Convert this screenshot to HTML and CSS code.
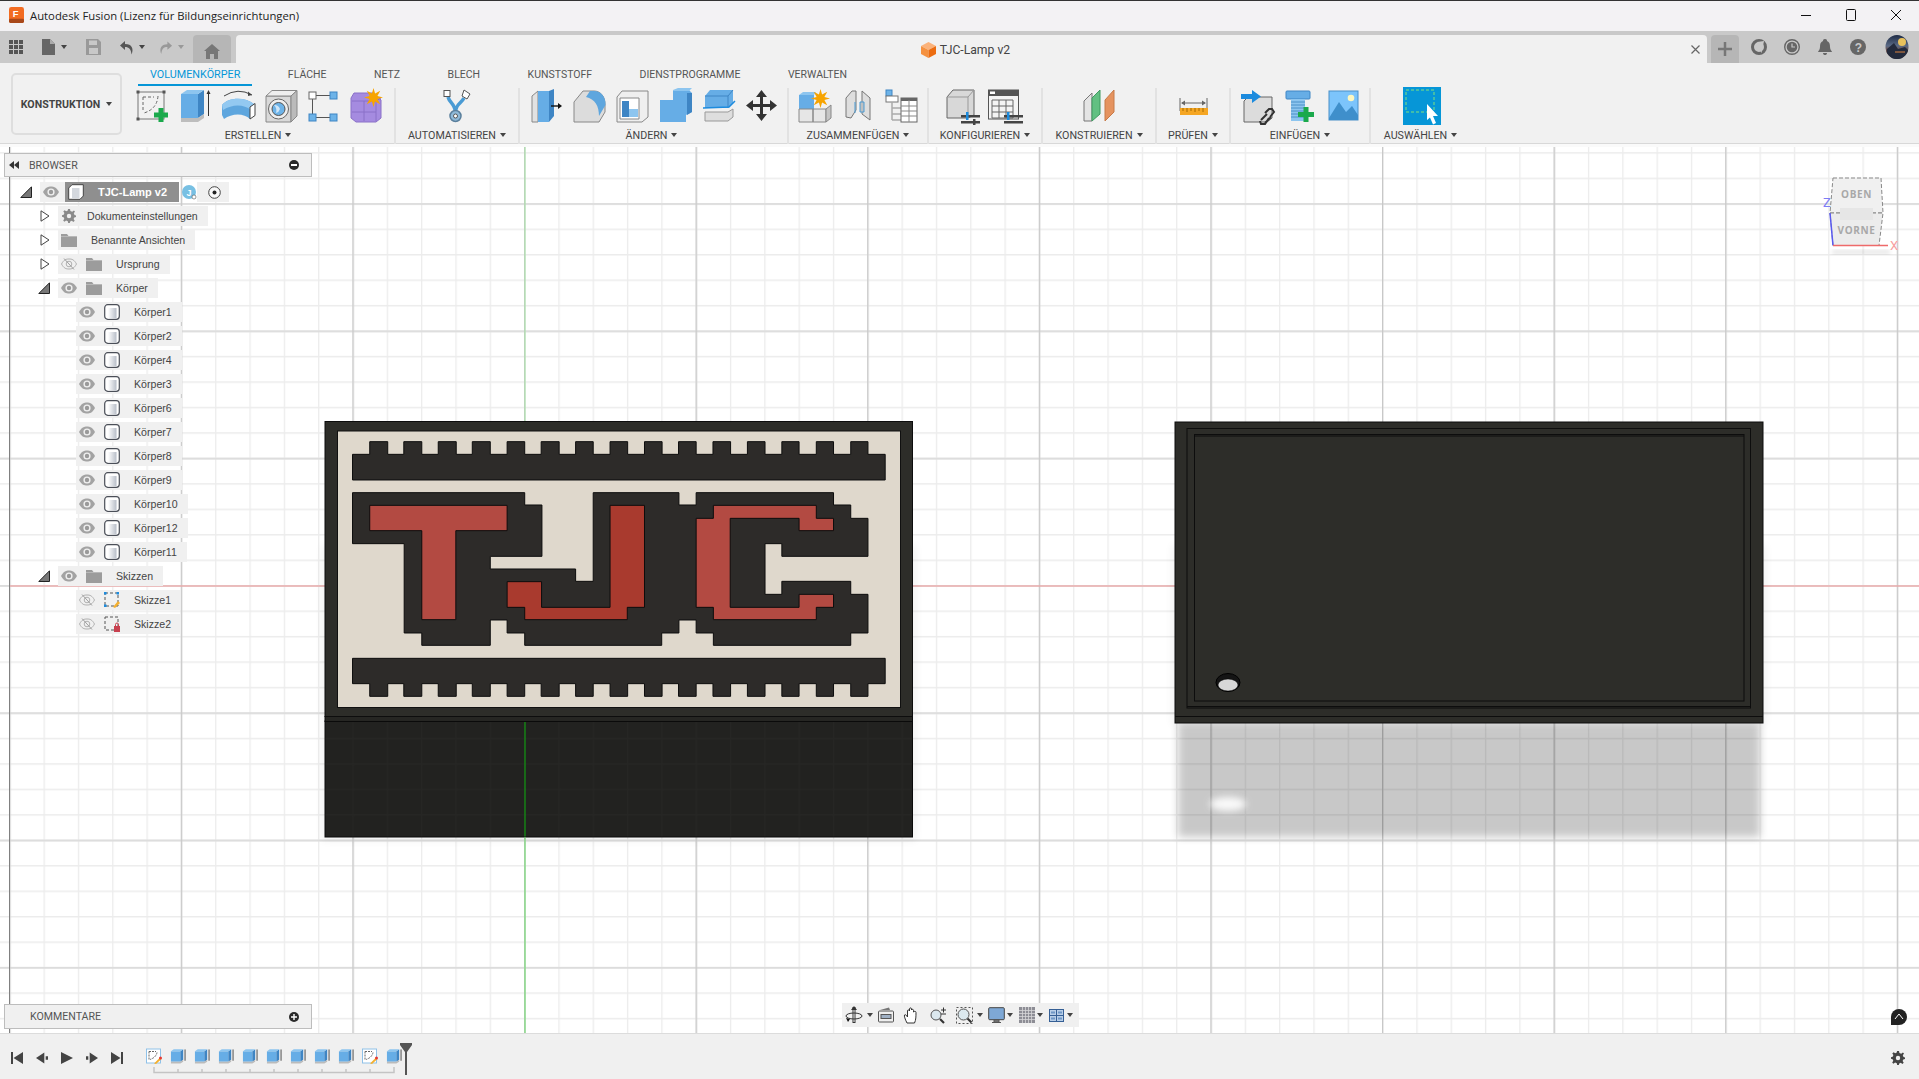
FILE: index.html
```html
<!DOCTYPE html>
<html lang="de">
<head>
<meta charset="utf-8">
<title>Autodesk Fusion</title>
<link rel="stylesheet" href="styles.css">
</head>
<body>
<svg class="defs" aria-hidden="true">
  <symbol id="eye" viewBox="0 0 16 12"><path d="M0 6C3 1 5 .5 8 .5S13 1 16 6C13 11 11 11.500 8 11.500S3 11 0 6Z" fill="#a3a3a3"/><circle cx="8" cy="6" r="3.600" fill="#f0f0f0"/><circle cx="8" cy="6" r="2.200" fill="#9a9a9a"/></symbol>
  <symbol id="eyeoff" viewBox="0 0 16 12"><path d="M.5 6C3 1.500 5 1 8 1S13 1.500 15.500 6C13 10.500 11 11 8 11S3 10.500 .5 6Z" fill="none" stroke="#b0b0b0"/><circle cx="8" cy="6" r="2.800" fill="none" stroke="#b0b0b0"/><path d="M3 .5 13 11.500" stroke="#a0a0a0"/></symbol>
  <symbol id="folder" viewBox="0 0 16 14"><path d="M0 1H6L7.500 3H16V14H0Z" fill="#9c9c9c"/><path d="M0 3.500H16" stroke="#c4c4c4" stroke-width=".7"/></symbol>
  <symbol id="body" viewBox="0 0 16 16"><defs><linearGradient id="bg" x1="0" x2="1" y1="0" y2="0"><stop offset="0" stop-color="#fff"/><stop offset="1" stop-color="#b8bec8"/></linearGradient></defs><rect x=".7" y=".7" width="14.600" height="14.600" rx="3" fill="#fff" stroke="#4b4f58" stroke-width="1.200"/><rect x="4" y="4" width="8.500" height="10.500" fill="url(#bg)"/></symbol>
  <symbol id="tw-open" viewBox="0 0 12 12"><path d="M11.500 .8V11.500H.8Z" fill="#777" stroke="#222"/></symbol>
  <symbol id="tw-closed" viewBox="0 0 10 12"><path d="M1 .8 9 6 1 11.200Z" fill="#fff" stroke="#444"/></symbol>
  <symbol id="star" viewBox="0 0 18 18"><polygon points="18,9 12.700,10.500 15.400,15.400 10.500,12.700 9,18 7.500,12.700 2.600,15.400 5.300,10.500 0,9 5.300,7.500 2.600,2.600 7.500,5.300 9,0 10.500,5.300 15.400,2.600 12.700,7.500" fill="#f7a400"/></symbol>
  <symbol id="t-ext" viewBox="0 0 17 17"><path d="M1 3H11V14H1Z" fill="#66ade6"/><path d="M11 3 14 .8V12L11 14Z" fill="#3e85c4"/><path d="M1 3 4 .8H14L11 3Z" fill="#8dc5ef"/><path d="M1 14H11L14 12V14L11 16H1Z" fill="#bbb"/><path d="M16 1V13" stroke="#444"/></symbol>
  <symbol id="t-sk" viewBox="0 0 16 16"><rect x=".5" y=".5" width="14" height="14" fill="#fff" stroke="#8fc1e8"/><path d="M3 3H10M3 3V11M11 4Q10 9 4 11" fill="none" stroke="#666" stroke-dasharray="2 1"/><path d="M8 15 14 9 15.500 10.500 10 15.500Z" fill="#f4b030"/><circle cx="14.500" cy="9.500" r="1.500" fill="#e53935"/></symbol>
</svg>

<div class="app">
  <header class="titlebar">
    <svg class="app-icon" viewBox="0 0 16 17"><rect width="16" height="17" rx="2.500" fill="#f26b21"/><rect y="12.500" width="16" height="4.500" rx="1.500" fill="#a8481a"/><text x="4" y="11" class="app-f">F</text></svg>
    <span class="title-text">Autodesk Fusion (Lizenz für Bildungseinrichtungen)</span>
    <div class="win-controls">
      <svg class="wc" viewBox="0 0 12 12"><path d="M1 6.500H11" stroke="#111" stroke-width="1"/></svg>
      <svg class="wc" viewBox="0 0 12 12"><rect x="1.500" y=".5" width="9" height="11" rx="1" fill="none" stroke="#111"/></svg>
      <svg class="wc" viewBox="0 0 12 12"><path d="M1 1 11 11M11 1 1 11" stroke="#111"/></svg>
    </div>
  </header>

  <nav class="qat">
    <svg class="q-grid" viewBox="0 0 14 14"><g fill="#555"><rect width="4" height="4"/><rect x="5" width="4" height="4"/><rect x="10" width="4" height="4"/><rect y="5" width="4" height="4"/><rect x="5" y="5" width="4" height="4"/><rect x="10" y="5" width="4" height="4"/><rect y="10" width="4" height="4"/><rect x="5" y="10" width="4" height="4"/><rect x="10" y="10" width="4" height="4"/></g></svg>
    <svg class="q-file" viewBox="0 0 13 16"><path d="M0 0H8L13 5V16H0Z" fill="#666"/><path d="M8 0V5H13" fill="#aaa"/></svg>
    <i class="caret q-c1"></i>
    <svg class="q-save" viewBox="0 0 15 16"><path d="M0 0H12L15 3V16H0Z" fill="#999"/><rect x="3" y="1.500" width="8" height="4.500" fill="#c8c8c8"/><rect x="3" y="9" width="9" height="6" fill="#c8c8c8"/></svg>
    <svg class="q-undo" viewBox="0 0 15 15"><path d="M6 1 1 5.500 6 10V7C10 7 12 9 12.500 14.500 15 9 13 4 6 4Z" fill="#555"/></svg>
    <i class="caret q-c2"></i>
    <svg class="q-redo" viewBox="0 0 15 15"><path d="M9 1 14 5.500 9 10V7C5 7 3 9 2.500 14.500 0 9 2 4 9 4Z" fill="#999"/></svg>
    <i class="caret q-c3 muted"></i>
    <div class="home-tab"><svg class="q-home" viewBox="0 0 16 15"><path d="M8 0 16 7H14V15H10V10H6V15H2V7H0Z" fill="#777"/></svg></div>
    <div class="doc-tab">
      <div class="doc-name">
        <svg class="doc-cube" viewBox="0 0 15 16"><path d="M7.500 0 15 4 7.500 8 0 4Z" fill="#fbb27a"/><path d="M0 4 7.500 8V16L0 12Z" fill="#f5913f"/><path d="M15 4 7.500 8V16L15 12Z" fill="#ec6c10"/></svg>
        <span>TJC-Lamp v2</span>
      </div>
      <svg class="doc-close" viewBox="0 0 9 9"><path d="M.5 .5 8.500 8.500M8.500 .5 .5 8.500" stroke="#666" stroke-width="1.200"/></svg>
    </div>
    <div class="plus-tab"><svg class="q-plus" viewBox="0 0 14 14"><path d="M7 0V14M0 7H14" stroke="#777" stroke-width="2.500"/></svg></div>
    <div class="q-right">
      <svg class="q-ico" viewBox="0 0 16 16"><circle cx="8" cy="8" r="6.500" fill="none" stroke="#666" stroke-width="3"/><path d="M6 3 10 7 7.500 9 10.500 14 13 2Z" fill="#c9c9c9"/></svg>
      <svg class="q-ico" viewBox="0 0 16 16"><circle cx="8" cy="8" r="7.300" fill="none" stroke="#666" stroke-width="1.400"/><circle cx="8" cy="8" r="5.300" fill="#666"/><path d="M8 4.500V8H11" fill="none" stroke="#c8c8c8" stroke-width="1.200"/></svg>
      <svg class="q-ico" viewBox="0 0 16 16"><path d="M8 0C10 0 10 1.500 10 2 12.500 3 13 5 13 8 13 11 15 12 15 13H1C1 12 3 11 3 8 3 5 3.500 3 6 2 6 1.500 6 0 8 0ZM6 14H10C10 15.500 9 16 8 16S6 15.500 6 14Z" fill="#666"/></svg>
      <svg class="q-ico" viewBox="0 0 16 16"><circle cx="8" cy="8" r="8" fill="#666"/><text x="4.700" y="12.500" class="q-help">?</text></svg>
      <svg class="avatar" viewBox="0 0 24 24"><defs><clipPath id="avc"><ellipse cx="12" cy="12" rx="11.500" ry="12"/></clipPath><linearGradient id="avg" x1="0" x2="0" y1="0" y2="1"><stop offset="0" stop-color="#1d2a44"/><stop offset=".45" stop-color="#5a6a86"/><stop offset=".7" stop-color="#7a4a3a"/><stop offset="1" stop-color="#1a2030"/></linearGradient></defs><g clip-path="url(#avc)"><rect width="24" height="24" fill="url(#avg)"/><circle cx="17" cy="7" r="4" fill="#e8c15c"/><path d="M2 14 9 8 13 14 20 12 24 16V24H0Z" fill="#232a3c"/><path d="M10 17H20" stroke="#d9813f"/></g></svg>
    </div>
  </nav>

  <section class="ribbon">
    <button class="workspace"><span>KONSTRUKTION</span><i class="caret"></i></button>
    <div class="ribbon-main">
      <div class="tabs">
        <span class="tab active">VOLUMENKÖRPER</span>
        <span class="tab">FLÄCHE</span>
        <span class="tab">NETZ</span>
        <span class="tab">BLECH</span>
        <span class="tab">KUNSTSTOFF</span>
        <span class="tab">DIENSTPROGRAMME</span>
        <span class="tab">VERWALTEN</span>
      </div>
      <div class="groups">
        <div class="group g1">
          <div class="icons">
            <svg class="ri" viewBox="0 0 43 38"><rect x="7" y="4" width="26" height="27" fill="none" stroke="#777"/><g fill="#555"><rect x="5.500" y="2.500" width="3" height="3"/><rect x="31.500" y="2.500" width="3" height="3"/><rect x="5.500" y="29.500" width="3" height="3"/></g><path d="M12 9H23M12 9V24M27 8Q26 21 13 25" fill="none" stroke="#666" stroke-dasharray="3 2"/><path d="M27.500 20H32.500V24.500H37V29.500H32.500V34H27.500V29.500H23V24.500H27.500Z" fill="#1ba94c"/></svg>
            <svg class="ri" viewBox="0 0 43 38"><path d="M7 6H24V30H7Z" fill="#66ade6"/><path d="M24 6 30 2V26L24 30Z" fill="#3e85c4"/><path d="M7 6 13 2H30L24 6Z" fill="#8dc5ef"/><path d="M7 30H24L30 26V30L24 34H7Z" fill="#bdbdbd"/><path d="M34.500 4V28" stroke="#333"/><path d="M32.500 6 34.500 2 36.500 6Z" fill="#333"/></svg>
            <svg class="ri" viewBox="0 0 43 38"><path d="M7 8Q21 -1 35 7" fill="none" stroke="#444"/><path d="M35 7 31 3.500 31 8Z" fill="#444"/><path d="M5 17C12 9 28 9 37 16L33 31C27 25 15 25 7 31L5 27Z" fill="#5ea6de"/><path d="M5 17C12 9 28 9 37 16L34 22C27 16 15 16 6 22Z" fill="#93c9f1"/><path d="M33 19 38 15.500V27.500L33 31Z" fill="#fff" stroke="#444"/></svg>
            <svg class="ri" viewBox="0 0 43 38"><path d="M6 8H31V34H6Z" fill="#d9d9d9" stroke="#888"/><path d="M6 8 12 2.500H37L31 8Z" fill="#eee" stroke="#888"/><path d="M31 8 37 2.500V28L31 34Z" fill="#bbb" stroke="#888"/><circle cx="18.500" cy="21" r="10" fill="#eee" stroke="#666"/><circle cx="18.500" cy="21" r="6.500" fill="#6db3e8" stroke="#555"/><path d="M14 17A6 6 0 0 1 20 21 6 6 0 0 1 16 25 8 8 0 0 0 14 17Z" fill="#cfe6f8"/></svg>
            <svg class="ri shift-s" viewBox="0 0 43 38"><path d="M15 7.500H29M11.500 11V26M15 29.500H29" stroke="#555"/><rect x="8" y="4" width="7" height="7" fill="#fff" stroke="#666"/><g fill="#6db3e8" stroke="#3e85c4"><rect x="29" y="4" width="7" height="7"/><rect x="8" y="26" width="7" height="7"/><rect x="29" y="26" width="7" height="7"/></g></svg>
            <svg class="ri shift-s" viewBox="0 0 43 38"><path d="M10 5H30L37 12V30L32 34H12L7 30V10Z" fill="#a58be0" stroke="#8a70c8"/><path d="M8 13H32V33M8 24H32M20 13V33M32 13 37 10" fill="none" stroke="#8a70c8"/><use href="#star" x="20" y="0" width="19" height="19"/></svg>
          </div>
          <div class="label">ERSTELLEN<i class="caret"></i></div>
        </div>
        <div class="group g2">
          <div class="icons">
            <svg class="ri" viewBox="0 0 43 38"><path d="M14 9C16 16 21 15 21.500 25M30 10C27 16 22 15 21.500 25" fill="none" stroke="#4a9bd4" stroke-width="3.500"/><rect x="10" y="2.500" width="6" height="6" fill="#fff" stroke="#555"/><path d="M30 2 36 6 33 11 28 8Z" fill="#fff" stroke="#555"/><circle cx="21.500" cy="28" r="5.500" fill="#8fb9d8" stroke="#5a7f9c" stroke-width="1.500"/><circle cx="21.500" cy="28" r="2" fill="#fff" stroke="#555"/></svg>
          </div>
          <div class="label">AUTOMATISIEREN<i class="caret"></i></div>
        </div>
        <div class="group g3">
          <div class="icons">
            <svg class="ri shift-l" viewBox="0 0 43 38"><path d="M11 8 17 3V34H11Z" fill="#e2e2e2" stroke="#888"/><path d="M17 3H28V34H17Z" fill="#66ade6"/><path d="M28 3 33 1V28L28 34Z" fill="#3e85c4"/><path d="M30 18H39" stroke="#111" stroke-width="1.400"/><path d="M37 15 41 18 37 21Z" fill="#111"/></svg>
            <svg class="ri" viewBox="0 0 43 38"><path d="M6 14 15 3H26C32 3 37 8 37 16V24L31 34H6Z" fill="#dcdcdc" stroke="#888"/><path d="M22 3H26C33 3 38 9 37.500 17L31 28C31 18 27 11 18 9Z" fill="#5ea6de"/></svg>
            <svg class="ri" viewBox="0 0 43 38"><path d="M6 9 11 3H37V29L31 34H6Z" fill="#efefef" stroke="#888"/><path d="M9 10H28V31H9Z" fill="#fff" stroke="#888"/><path d="M11 13H18V21H27V29H11Z" fill="#3e85c4"/><path d="M18 21H27V29H18Z" fill="#8dc5ef"/></svg>
            <svg class="ri" viewBox="0 0 43 38"><path d="M6 12H19V2H35L38 5V24L32 27V34H6Z" fill="#66ade6"/><path d="M19 2 24 0H38L35 3H19Z" fill="#8dc5ef"/><path d="M33 5H38V24L33 27Z" fill="#3e85c4"/></svg>
            <svg class="ri" viewBox="0 0 43 38"><path d="M8 8 13 2H36V15L31 20H8Z" fill="#66ade6"/><path d="M8 8H31V20M31 8 36 2" fill="none" stroke="#3e85c4"/><path d="M6 20 32 19 38 13" fill="none" stroke="#1c8bde" stroke-width="1.500"/><path d="M8 24H31L36 21V29L31 33H8Z" fill="#dedede" stroke="#999"/></svg>
            <svg class="ri" viewBox="0 0 43 38"><path d="M21.500 2 27 9H23V16H30V12L37 17.500 30 23V19H23V26H27L21.500 33 16 26H20V19H13V23L6 17.500 13 12V16H20V9H16Z" fill="#333"/></svg>
          </div>
          <div class="label">ÄNDERN<i class="caret"></i></div>
        </div>
        <div class="group g4">
          <div class="icons">
            <svg class="ri" viewBox="0 0 43 38"><path d="M5 7H20V21H5Z" fill="#66ade6"/><path d="M5 7 9 4H22L20 7Z" fill="#8dc5ef"/><path d="M5 21H19V34H5ZM19 21H32V34H19Z" fill="#e6e6e6" stroke="#888"/><path d="M32 21 37 17V30L32 34Z" fill="#c5c5c5" stroke="#888"/><use href="#star" x="17" y="1" width="19" height="19"/></svg>
            <svg class="ri" viewBox="0 0 43 38"><path d="M9 10 15 3H19V22L14 30 9 29Z" fill="#dedede" stroke="#777"/><path d="M25 3 33 10V32L25 26Z" fill="#dedede" stroke="#777"/><path d="M18 14V25M23 14H27V24H23Z" fill="#c0c0c0" stroke="#4a9bd4"/></svg>
            <svg class="ri" viewBox="0 0 43 38"><rect x="6" y="2" width="6" height="6" fill="#6db3e8" stroke="#3e85c4"/><rect x="6" y="8" width="12" height="6" fill="#fff" stroke="#777"/><path d="M12 14V32M12 20H21M12 26H21M12 32H21" stroke="#aaa" stroke-width="1.500"/><rect x="21" y="10" width="16" height="24" fill="#fff" stroke="#666"/><path d="M21 11.500H37" stroke="#666" stroke-width="3"/><path d="M21 18H37M21 23H37M21 28H37M29 12V34" stroke="#888"/></svg>
          </div>
          <div class="label">ZUSAMMENFÜGEN<i class="caret"></i></div>
        </div>
        <div class="group g5">
          <div class="icons">
            <svg class="ri" viewBox="0 0 43 38"><path d="M5 9 11 2H32V27L26 30H5Z" fill="#d8d8d8" stroke="#666"/><path d="M5 9H26V30M26 9 32 2" fill="none" stroke="#999"/><path d="M19 27H38V29.500H19ZM19 33H38V35.500H19Z" fill="#444"/><rect x="24" y="24" width="2.500" height="8" fill="#1c8bde"/><rect x="31" y="31" width="2.500" height="6" fill="#444"/></svg>
            <svg class="ri" viewBox="0 0 43 38"><rect x="3.500" y="2" width="30" height="29" fill="#f4f4f4" stroke="#555"/><rect x="3.500" y="2" width="30" height="6" fill="#555"/><rect x="5" y="3.500" width="5" height="2.500" fill="#fff"/><path d="M7 12H28V30M7 18H28M7 24H28M7 12V30H28M14 12V30M21 12V30" fill="none" stroke="#666"/><path d="M19 27H38V29.500H19ZM19 33H38V35.500H19Z" fill="#444"/><rect x="22" y="24" width="2.500" height="8" fill="#1c8bde"/></svg>
          </div>
          <div class="label">KONFIGURIEREN<i class="caret"></i></div>
        </div>
        <div class="group g6">
          <div class="icons">
            <svg class="ri" viewBox="0 0 43 38"><path d="M6 13 14 5V33H6Z" fill="#e4e4e4" stroke="#777"/><path d="M14 10 22 2V26L14 33Z" fill="#62c082" stroke="#3f9a60"/><path d="M27 12 36 2V24L27 33Z" fill="#e5935f" stroke="#c77a48"/></svg>
          </div>
          <div class="label">KONSTRUIEREN<i class="caret"></i></div>
        </div>
        <div class="group g7">
          <div class="icons">
            <svg class="ri" viewBox="0 0 43 38"><path d="M8 10V23M35 10V23M10 15H33" fill="none" stroke="#666"/><path d="M13 12.500 9 15 13 17.500ZM30 12.500 34 15 30 17.500Z" fill="#666"/><rect x="8" y="20" width="28" height="7" fill="#f5a623"/><path d="M11 20V23M15 20V24M19 20V23M23 20V24M27 20V23M31 20V24" stroke="#a66a00"/></svg>
          </div>
          <div class="label">PRÜFEN<i class="caret"></i></div>
        </div>
        <div class="group g8">
          <div class="icons">
            <svg class="ri" viewBox="0 0 43 38"><path d="M8 13 12 9H36V30L31 34H8Z" fill="#dcdcdc" stroke="#666"/><path d="M5 6H16V2L25 8.500 16 15V11H5Z" fill="#1c8bde"/><path d="M25 32 31 26M29 35 35 29M29 25 33 21H36L38 24 34 29M33 30 29 36H25L24 33" fill="none" stroke="#333" stroke-width="2"/></svg>
            <svg class="ri" viewBox="0 0 43 38"><rect x="7" y="3" width="24" height="8" rx="1" fill="#66ade6" stroke="#3e85c4"/><rect x="12" y="11" width="14" height="22" fill="#8dc5ef"/><path d="M12 14H26M12 17H26M12 20H26M12 23H26M12 26H26M12 29H26" stroke="#4a90c8"/><path d="M24.500 19H29.500V24H35V29H29.500V34H24.500V29H19V24H24.500Z" fill="#1ba94c"/></svg>
            <svg class="ri" viewBox="0 0 43 38"><rect x="7" y="3" width="29" height="29" fill="#7cc4fb" stroke="#4a90c8"/><path d="M7 30 17 14 24 24 30 18 36 27V32H7Z" fill="#3f8fcb"/><circle cx="29" cy="10" r="3.300" fill="#fdf7c0"/></svg>
          </div>
          <div class="label">EINFÜGEN<i class="caret"></i></div>
        </div>
        <div class="group g9">
          <div class="icons">
            <svg class="sel" viewBox="0 0 38 38"><rect width="38" height="38" fill="#0696d7"/><rect x="3" y="3" width="28" height="22" fill="none" stroke="#7fe27f" stroke-dasharray="3 2"/><path d="M24 17 35 29H30L33 36 30 37.500 27 30.500 24 33Z" fill="#fff"/></svg>
          </div>
          <div class="label">AUSWÄHLEN<i class="caret"></i></div>
        </div>
      </div>
    </div>
  </section>

  <main class="viewport">
    <svg class="canvas" viewBox="0 147 1919 886">
      <defs>
        <pattern id="minor" patternUnits="userSpaceOnUse" x="524" y="585" width="34.320" height="25.460">
          <rect width="1.300" height="25.460" class="gm"/><rect width="34.320" height="1.500" class="gm"/>
        </pattern>
        <pattern id="major" patternUnits="userSpaceOnUse" x="524" y="585" width="171.600" height="127.300">
          <rect width="171.600" height="1.800" class="gmh"/><rect width="1.300" height="127.300" class="gmv"/>
        </pattern>
        <filter id="blur5" x="-10%" y="-10%" width="120%" height="120%"><feGaussianBlur stdDeviation="4"/></filter>
        <filter id="blur3" x="-60%" y="-100%" width="220%" height="300%"><feGaussianBlur stdDeviation="3.500"/></filter>
        <filter id="cubeb" x="-20%" y="-20%" width="140%" height="140%"><feGaussianBlur stdDeviation="2"/></filter>
      </defs>
      <rect x="0" y="147" width="1919" height="886" class="paper"/>
      <rect x="0" y="147" width="1919" height="886" fill="url(#minor)"/>
      <rect x="0" y="147" width="1919" height="886" fill="url(#major)"/>
      <rect x="9" y="147" width="1" height="886" class="axis-left"/>
      <rect x="10" y="585.500" width="1909" height="1" class="axis-red"/>
      <rect x="524.500" y="147" width="1" height="886" class="axis-green"/>

      <rect x="322" y="545" width="594" height="296" class="shadow-faint" filter="url(#blur5)"/>
      <rect x="1178" y="723" width="582" height="114" class="shadow" filter="url(#blur5)"/>
      <rect x="1172" y="545" width="594" height="180" class="shadow-faint" filter="url(#blur5)"/>
      <ellipse cx="1228" cy="804" rx="18" ry="7" class="shadow-hole" filter="url(#blur3)"/>

      <!-- left model -->
      <rect x="325" y="721" width="587.500" height="116" class="m-side"/>
      <rect x="325" y="721" width="587.500" height="116" fill="url(#minor)" class="m-sidegrid"/>
      <rect x="524.500" y="722" width="1" height="114.500" class="axis-green-strong"/>
      <rect x="524.500" y="837" width="1" height="196" class="axis-green-mid"/>
      <rect x="325" y="716.500" width="587.500" height="5" class="m-band"/>
      <rect x="325" y="421.500" width="587.500" height="295" class="m-top"/>
      <rect x="337.500" y="431" width="563" height="276.500" class="m-cream"/>
      <g transform="translate(320 415) scale(.38265 .33333)">
        <path class="m-dark" d="M85 118H130V80H177V118H219V80H266V118H309V80H356V118H398V80H445V118H489V80H535V118H578V80H625V118H668V80H714V118H758V80H804V118H848V80H894V118H937V80H983V118H1027V80H1073V118H1117V80H1163V118H1207V80H1252V118H1297V80H1342V118H1387V80H1432V118H1477V195H85Z"/>
        <path class="m-dark" d="M85 730H1477V806H1432V844H1387V806H1342V844H1297V806H1252V844H1207V806H1163V844H1117V806H1073V844H1027V806H983V844H937V806H894V844H848V806H804V844H758V806H714V844H668V806H625V844H578V806H535V844H489V806H445V844H398V806H356V844H309V806H266V844H219V806H177V844H130V806H85Z"/>
        <path class="m-dark" d="M85 233H535V270H580V424H445V462H668V499H714V233H938V270H983V233H1342V270H1387V310H1432V424H1207V386H1163V538H1207V499H1387V538H1432V654H1387V691H1028V654H983V615H938V654H893V691H535V654H489V615H445V691H266V654H220V386H85Z"/>
        <path class="m-red" d="M130 271H489V347H355V614H266V347H130Z"/>
        <path class="m-red2" d="M758 271H848V577H803V614H535V577H489V500H579V577H758Z"/>
        <path class="m-red" d="M1028 271H1297V310H1342V347H1252V310H1072V577H1252V538H1342V577H1297V614H1028V577H983V310H1028Z"/>
      </g>

      <!-- right model -->
      <rect x="1175" y="422" width="588" height="301" class="m-top"/>
      <path d="M1175 716.500H1763" class="m-line"/>
      <rect x="1187" y="428.500" width="563.500" height="279.500" class="m-frame"/>
      <rect x="1194.500" y="434.500" width="549.500" height="266.500" class="m-frame"/>
      <path d="M1194.500 436H1744M1187 706.500H1750.500" class="m-line"/>
      <ellipse cx="1228" cy="682.500" rx="12" ry="9" class="m-hole"/>
      <ellipse cx="1228" cy="685" rx="10" ry="6" class="m-holeb"/>

      <!-- view cube -->
      <g class="cube">
        <path d="M1832 250H1890V254H1832Z" class="cube-shadow" filter="url(#cubeb)"/>
        <path d="M1833 178H1881L1883 213H1830Z" class="cube-top"/>
        <path d="M1830 213H1883L1879 245.500H1833Z" class="cube-front"/>
        <rect x="1840" y="208" width="33" height="12" class="cube-inner"/>
        <path d="M1830 213 1833 245.500" class="cube-z"/>
        <path d="M1833 245.500H1888" class="cube-x"/>
        <text x="1856.500" y="198" class="cube-t">OBEN</text>
        <text x="1856.500" y="234" class="cube-t">VORNE</text>
        <text x="1827" y="207" class="cube-lz">Z</text>
        <text x="1894" y="250" class="cube-lx">X</text>
      </g>
    </svg>

    <aside class="browser">
      <div class="panel-head">
        <svg class="rew" viewBox="0 0 10 8"><path d="M5 0V8L0 4ZM10 0V8L5 4Z" fill="#333"/></svg>
        <span>BROWSER</span>
        <svg class="pm" viewBox="0 0 10 10"><circle cx="5" cy="5" r="5" fill="#2a2a2a"/><rect x="2" y="4" width="6" height="2" fill="#fff"/></svg>
      </div>
      <div class="tree">
        <div class="row l0">
          <svg class="tw"><use href="#tw-open"/></svg>
          <div class="item root">
            <svg class="ic-eye"><use href="#eye"/></svg>
            <div class="root-name">
              <svg class="ic-root" viewBox="0 0 16 16"><path d="M.7 4 4 .7H15.300V12L12 15.300H.7Z" fill="#fff" stroke="#444"/><path d="M4 4H11.500V14.500H4Z" fill="#d4d8de"/></svg>
              <b>TJC-Lamp v2</b>
            </div>
          </div>
          <svg class="badge" viewBox="0 0 15 15"><circle cx="7" cy="7" r="7" fill="#78c0e3"/><text x="4.500" y="10.500" class="badge-t">J</text><circle cx="12" cy="12" r="2" fill="#fff" stroke="#555" stroke-width=".6"/></svg>
          <svg class="radio" viewBox="0 0 13 13"><circle cx="6.500" cy="6.500" r="5.800" fill="#f8f8f8" stroke="#444"/><circle cx="6.500" cy="6.500" r="2" fill="#222"/></svg>
        </div>
        <div class="row l1">
          <svg class="tw tw-c"><use href="#tw-closed"/></svg>
          <div class="item pad-doc">
            <svg class="ic-gear" viewBox="0 0 14 14"><path d="M6 0H8L8.400 2 10.200 2.700 11.900 1.500 13 2.600 11.800 4.300 12.500 6 14 6.400V8L12.300 8.400 11.600 10.100 12.700 11.800 11.400 13 9.800 11.800 8.200 12.500 7.800 14H6.200L5.800 12.300 4.100 11.600 2.400 12.700 1.200 11.400 2.300 9.800 1.600 8.200 0 7.800V6.200L1.700 5.800 2.400 4.100 1.300 2.400 2.600 1.200 4.200 2.300 5.800 1.600Z" fill="#8a8a8a"/><circle cx="7" cy="7" r="2.200" fill="#f0f0f0"/></svg>
            <span class="t">Dokumenteinstellungen</span>
          </div>
        </div>
        <div class="row l1">
          <svg class="tw tw-c"><use href="#tw-closed"/></svg>
          <div class="item pad-view">
            <svg class="ic-folder"><use href="#folder"/></svg>
            <span class="t">Benannte Ansichten</span>
          </div>
        </div>
        <div class="row l1">
          <svg class="tw tw-c"><use href="#tw-closed"/></svg>
          <div class="item"><svg class="ic-eye"><use href="#eyeoff"/></svg><svg class="ic-folder gap"><use href="#folder"/></svg><span class="t">Ursprung</span></div>
        </div>
        <div class="row l1">
          <svg class="tw"><use href="#tw-open"/></svg>
          <div class="item"><svg class="ic-eye"><use href="#eye"/></svg><svg class="ic-folder gap"><use href="#folder"/></svg><span class="t">Körper</span></div>
        </div>
        <div class="row l2"><div class="item"><svg class="ic-eye"><use href="#eye"/></svg><svg class="ic-body"><use href="#body"/></svg><span class="t">Körper1</span></div></div>
        <div class="row l2"><div class="item"><svg class="ic-eye"><use href="#eye"/></svg><svg class="ic-body"><use href="#body"/></svg><span class="t">Körper2</span></div></div>
        <div class="row l2"><div class="item"><svg class="ic-eye"><use href="#eye"/></svg><svg class="ic-body"><use href="#body"/></svg><span class="t">Körper4</span></div></div>
        <div class="row l2"><div class="item"><svg class="ic-eye"><use href="#eye"/></svg><svg class="ic-body"><use href="#body"/></svg><span class="t">Körper3</span></div></div>
        <div class="row l2"><div class="item"><svg class="ic-eye"><use href="#eye"/></svg><svg class="ic-body"><use href="#body"/></svg><span class="t">Körper6</span></div></div>
        <div class="row l2"><div class="item"><svg class="ic-eye"><use href="#eye"/></svg><svg class="ic-body"><use href="#body"/></svg><span class="t">Körper7</span></div></div>
        <div class="row l2"><div class="item"><svg class="ic-eye"><use href="#eye"/></svg><svg class="ic-body"><use href="#body"/></svg><span class="t">Körper8</span></div></div>
        <div class="row l2"><div class="item"><svg class="ic-eye"><use href="#eye"/></svg><svg class="ic-body"><use href="#body"/></svg><span class="t">Körper9</span></div></div>
        <div class="row l2"><div class="item"><svg class="ic-eye"><use href="#eye"/></svg><svg class="ic-body"><use href="#body"/></svg><span class="t">Körper10</span></div></div>
        <div class="row l2"><div class="item"><svg class="ic-eye"><use href="#eye"/></svg><svg class="ic-body"><use href="#body"/></svg><span class="t">Körper12</span></div></div>
        <div class="row l2"><div class="item"><svg class="ic-eye"><use href="#eye"/></svg><svg class="ic-body"><use href="#body"/></svg><span class="t">Körper11</span></div></div>
        <div class="row l1">
          <svg class="tw"><use href="#tw-open"/></svg>
          <div class="item"><svg class="ic-eye"><use href="#eye"/></svg><svg class="ic-folder gap"><use href="#folder"/></svg><span class="t">Skizzen</span></div>
        </div>
        <div class="row l2"><div class="item"><svg class="ic-eye"><use href="#eyeoff"/></svg><svg class="ic-body" viewBox="0 0 16 16"><rect x="1" y="1" width="13" height="13" fill="none" stroke="#555" stroke-dasharray="3 2"/><g fill="#1c8bde"><rect width="2.500" height="2.500"/><rect x="12.500" width="2.500" height="2.500"/><rect y="12.500" width="2.500" height="2.500"/></g><path d="M9 15 14 9 16 11 11 16Z" fill="#f4b030"/></svg><span class="t">Skizze1</span></div></div>
        <div class="row l2"><div class="item"><svg class="ic-eye"><use href="#eyeoff"/></svg><svg class="ic-body" viewBox="0 0 16 16"><rect x="1" y="1" width="13" height="13" fill="none" stroke="#555" stroke-dasharray="3 2"/><rect x="10" y="10" width="6" height="6" fill="#c8414f"/><path d="M11.500 10V8.500A1.500 1.500 0 0 1 14.500 8.500V10" fill="none" stroke="#c8414f"/></svg><span class="t">Skizze2</span></div></div>
      </div>
    </aside>

    <aside class="comments">
      <span>KOMMENTARE</span>
      <svg class="pm" viewBox="0 0 10 10"><circle cx="5" cy="5" r="5" fill="#2a2a2a"/><path d="M2 4.300H4.300V2H5.700V4.300H8V5.700H5.700V8H4.300V5.700H2Z" fill="#fff"/></svg>
    </aside>

    <div class="navbar">
      <svg class="nv w18" viewBox="0 0 18 18"><path d="M9 1V17" stroke="#333" stroke-width="3"/><path d="M9 2V16" stroke="#fff"/><path d="M6 4 9 0 12 4Z" fill="#333"/><ellipse cx="9" cy="10" rx="8" ry="3" fill="none" stroke="#333"/><path d="M1 12 5 13 3 16Z" fill="#111"/></svg><i class="caret nc nc4"></i>
      <svg class="nv w16 ml" viewBox="0 0 16 16"><rect x=".5" y="4" width="15" height="11" rx="1" fill="#eee" stroke="#555"/><rect x="3" y="7.500" width="10" height="4" fill="#9fb0c4" stroke="#555"/><path d="M2 3 11 .5 12 3Z" fill="#777"/></svg>
      <svg class="nv w17 ml2" viewBox="0 0 17 17"><path d="M4 16C2 12 1 9 1.500 8 2.500 7 3.500 8.500 4.500 10V4C4.500 2.500 6 2.500 6.500 4V2C6.500 .5 8.500 .5 8.500 2V3C9 2 10.500 2 10.500 3.500V5C11 4 13 4 13 5.500 13 9 13 13 11.500 16Z" fill="#fff" stroke="#333"/></svg>
      <svg class="nv w17 ml3" viewBox="0 0 17 17"><circle cx="6" cy="8" r="5" fill="#dbe8ee" stroke="#555"/><path d="M10 12 14 16" stroke="#333" stroke-width="2.200"/><path d="M11 3H16M13.500 .5V5.500M11 7H16" stroke="#333"/></svg>
      <svg class="nv w17 ml4" viewBox="0 0 17 17"><rect x=".5" y=".5" width="16" height="16" fill="none" stroke="#555" stroke-dasharray="2 2"/><circle cx="7.500" cy="7.500" r="5.500" fill="#dbe8ee" stroke="#555"/><path d="M11.500 11.500 15.500 15.500" stroke="#333" stroke-width="2.200"/></svg><i class="caret nc nc4"></i>
      <svg class="nv w17 ml5" viewBox="0 0 17 17"><rect x=".7" y=".7" width="15.600" height="12" rx="1" fill="#7ea8d6" stroke="#444"/><path d="M6 13H11V15H6ZM4 15.500H13" fill="#888" stroke="#555"/></svg><i class="caret nc nc2"></i>
      <svg class="nv w16 ml6" viewBox="0 0 16 16"><rect width="16" height="16" fill="#8d8d95"/><path d="M3.500 0V16M6.500 0V16M9.500 0V16M12.500 0V16M0 3.500H16M0 6.500H16M0 9.500H16M0 12.500H16" stroke="#d5d5d8" stroke-width=".8"/></svg><i class="caret nc nc2"></i>
      <svg class="nv w15 ml6" viewBox="0 0 15 13"><rect x=".5" y=".5" width="14" height="12" fill="#b9cfe8" stroke="#355f95"/><path d="M7.500 0V13M0 6.500H15" stroke="#355f95"/><g fill="#6f97c6"><rect x="2" y="2.500" width="4" height="2"/><rect x="9" y="2.500" width="4" height="2"/><rect x="2" y="8.500" width="4" height="2"/><rect x="9" y="8.500" width="4" height="2"/></g></svg><i class="caret nc nc3"></i>
    </div>

    <svg class="chat" viewBox="0 0 16 16"><path d="M8 0A8 8 0 0 1 8 16H0V8A8 8 0 0 1 8 0Z" fill="#222"/><path d="M4 10 8 5 12 10" fill="none" stroke="#fff"/></svg>
  </main>

  <footer class="timeline">
    <div class="transport">
      <svg class="tr" viewBox="0 0 12 12"><path d="M0 0H2V12H0ZM12 0V12L2.500 6Z" fill="#444"/></svg>
      <svg class="tr" viewBox="0 0 13 12"><path d="M9 0V12L0 6ZM10.500 4H13V8H10.500Z" fill="#444"/></svg>
      <svg class="tr" viewBox="0 0 13 13"><path d="M0 0 13 6.500 0 13Z" fill="#444"/></svg>
      <svg class="tr" viewBox="0 0 13 12"><path d="M4 0V12L13 6ZM0 4H2.500V8H0Z" fill="#444"/></svg>
      <svg class="tr" viewBox="0 0 12 12"><path d="M0 0V12L9.500 6ZM10 0H12V12H10Z" fill="#444"/></svg>
    </div>
    <div class="track">
      <div class="steps">
        <svg class="st"><use href="#t-sk"/></svg>
        <svg class="st"><use href="#t-ext"/></svg>
        <svg class="st"><use href="#t-ext"/></svg>
        <svg class="st"><use href="#t-ext"/></svg>
        <svg class="st"><use href="#t-ext"/></svg>
        <svg class="st"><use href="#t-ext"/></svg>
        <svg class="st"><use href="#t-ext"/></svg>
        <svg class="st"><use href="#t-ext"/></svg>
        <svg class="st"><use href="#t-ext"/></svg>
        <svg class="st"><use href="#t-sk"/></svg>
        <svg class="st"><use href="#t-ext"/></svg>
      </div>
      <svg class="bracket" viewBox="0 0 264 7"><path d="M12 0V5.500H252V0M36 2V5M60 2V5M84 2V5M108 2V5M132 2V5M156 2V5M180 2V5M204 2V5M228 2V5" fill="none" stroke="#c4c4c4" stroke-width="1.500"/></svg>
      <svg class="marker" viewBox="0 0 12 32"><path d="M0 0H12V2L7 9V32H5V9L0 2Z" fill="#555"/></svg>
    </div>
    <svg class="gear" viewBox="0 0 14 14"><path d="M6 0H8L8.400 2 10.200 2.700 11.900 1.500 13 2.600 11.800 4.300 12.500 6 14 6.400V8L12.300 8.400 11.600 10.100 12.700 11.800 11.400 13 9.800 11.800 8.200 12.500 7.800 14H6.200L5.800 12.300 4.100 11.600 2.400 12.700 1.200 11.400 2.300 9.800 1.600 8.200 0 7.800V6.200L1.700 5.800 2.400 4.100 1.300 2.400 2.600 1.200 4.200 2.300 5.800 1.600Z" fill="#444"/><circle cx="7" cy="7" r="2.200" fill="#f0f0f0"/></svg>
  </footer>
</div>
</body>
</html>
```
FILE: styles.css
```css
* { box-sizing: border-box; }
html, body { margin: 0; height: 100%; overflow: hidden; background: #fff; }
body { font-family: Roboto, "Liberation Sans", sans-serif; color: #444; }
svg { display: block; flex: none; }
.defs { position: absolute; width: 0; height: 0; }
.app { display: flex; flex-direction: column; height: 100vh; width: 100%; }

/* title bar */
.titlebar { height: 31px; flex: none; display: flex; align-items: center; background: #f3f2f4; border-top: 1px solid #333; padding: 0 0 2px 9px; }
.app-icon { width: 15px; height: 16px; }
.app-f { font: bold 10px "Liberation Sans", sans-serif; fill: #fff; }
.title-text { margin-left: 6px; font: 11.3px "Open Sans", sans-serif; color: #222; }
.win-controls { margin-left: auto; display: flex; gap: 33px; padding-right: 17px; }
.wc { width: 12px; height: 12px; }

/* quick access */
.qat { height: 32px; flex: none; background: #c9c9c9; display: flex; align-items: flex-end; position: relative; }
.q-grid { width: 14px; height: 14px; margin: 0 0 9px 9px; }
.q-file { width: 13px; height: 16px; margin: 0 0 8px 19px; }
.caret { display: inline-block; width: 0; height: 0; border-left: 3.500px solid transparent; border-right: 3.500px solid transparent; border-top: 4px solid #444; flex: none; }
.q-c1, .q-c2, .q-c3 { margin: 0 0 14px 6px; }
.muted { border-top-color: #999; }
.q-save { width: 15px; height: 16px; margin: 0 0 8px 19px; }
.q-undo { width: 15px; height: 15px; margin: 0 0 8px 18px; }
.q-c2 { margin-left: 5px; }
.q-redo { width: 14px; height: 15px; margin: 0 0 8px 14px; }
.q-c3 { margin-left: 5px; }
.home-tab { width: 38px; height: 28px; margin-left: 9px; background: #b6b6b6; border-radius: 4px 4px 0 0; display: flex; align-items: center; justify-content: center; }
.q-home { width: 16px; height: 15px; margin-top: 5px; }
.doc-tab { width: 1471px; height: 28px; margin-left: 5px; background: #f1f1f1; border-radius: 4px 4px 0 0; display: flex; align-items: center; justify-content: center; padding: 2px 0 0 0; position: relative; }
.doc-name { display: flex; align-items: center; gap: 4px; font-size: 12.2px; color: #444; margin-left: -12px; margin-top: 0; }
.doc-cube { width: 15px; height: 16px; }
.doc-close { position: absolute; right: 7px; top: 10px; width: 9px; height: 9px; }
.plus-tab { width: 28px; height: 28px; margin-left: 4px; background: #b6b6b6; border-radius: 4px 4px 0 0; display: flex; align-items: center; justify-content: center; }
.q-plus { width: 14px; height: 14px; }
.q-right { display: flex; align-items: center; height: 28px; margin-left: 12px; gap: 17px; padding-bottom: 4px; }
.q-ico { width: 16px; height: 16px; }
.q-help { font: bold 12px "Liberation Sans", sans-serif; fill: #c9c9c9; }
.avatar { width: 24px; height: 24px; margin-left: 2px; }

/* ribbon */
.ribbon { height: 84px; flex: none; display: flex; background: #f1f1f1; border-bottom: 3px solid #fafafa; box-shadow: inset 0 -1px 0 #d8d8d8; }
.workspace { width: 111px; height: 62px; margin: 10px 0 0 11px; background: #f1f1f1; border: 2px solid #dedede; border-radius: 5px; display: flex; align-items: center; justify-content: center; gap: 6px; padding: 0; font: bold 10.6px Roboto, sans-serif; color: #444; flex: none; }
.ribbon-main { margin-left: 4px; display: flex; flex-direction: column; }
.tabs { height: 23px; margin-left: 12px; display: flex; gap: 23.5px; }
.tab { height: 23px; padding: 6px 12px 0; font-size: 10.5px; line-height: 12px; color: #555; border-bottom: 2px solid transparent; white-space: nowrap; }
.tab.active { font-size: 10.8px; color: #0696d7; border-bottom-color: #0696d7; }
.groups { display: flex; height: 56px; margin-top: 2px; }
.group { display: flex; flex-direction: column; align-items: center; border-left: 2px solid #e2e2e2; }
.group.g1 { border-left: 0; width: 268px; }
.g2 { width: 124px; } .g3 { width: 269px; } .g4 { width: 140px; } .g5 { width: 114px; }
.g6 { width: 114px; } .g7 { width: 74px; } .g8 { width: 140px; } .g9 { width: 106px; }
.icons { display: flex; height: 38px; }
.g2 .icons { margin-right: 4px; }
.g9 .icons { margin-right: 2px; }
.shift-l { margin-left: -4px; margin-right: 4px; }
.shift-s { margin-left: -2px; margin-right: 2px; }
.ri { width: 43px; height: 38px; }
.sel { width: 38px; height: 38px; margin-top: -1px; }
.label { display: flex; align-items: center; gap: 4px; height: 18px; font-size: 10.7px; color: #444; white-space: nowrap; }
.g1 .label, .g3 .label { padding-right: 4px; }
.g9 .label { padding-right: 5px; }

/* viewport */
.viewport { flex: 1; position: relative; overflow: hidden; min-height: 0; }
.canvas { position: absolute; left: 0; top: 0; width: 1919px; height: 886px; }
.paper { fill: #fff; }
.gm { fill: #ececec; }
.gmv { fill: #c8c8c8; }
.gmh { fill: #dcdcdc; }
.axis-left { fill: #808080; }
.axis-red { fill: #f59a9a; }
.axis-green { fill: #a6e6a6; }
.axis-green-strong { fill: #0cae0c; }
.axis-green-mid { fill: #7fd67f; }
.shadow { fill: #000; opacity: .21; }
.shadow-faint { fill: #000; opacity: .05; }
.shadow-hole { fill: #fff; opacity: .9; }
.m-side { fill: #222220; stroke: #0a0a0a; stroke-width: 1; }
.m-sidegrid { opacity: .02; }
.m-band { fill: #262623; stroke: #0a0a0a; stroke-width: 1; }
.m-top { fill: #2d2d29; stroke: #0d0d0d; stroke-width: 1; }
.m-cream { fill: #dfd8cc; stroke: #101010; stroke-width: 1; }
.m-dark { fill: #2d2b29; stroke: #0d0d0d; stroke-width: 1; vector-effect: non-scaling-stroke; }
.m-red { fill: #b34a42; stroke: #0d0d0d; stroke-width: 1; vector-effect: non-scaling-stroke; }
.m-red2 { fill: #a93a2e; stroke: #0d0d0d; stroke-width: 1; vector-effect: non-scaling-stroke; }
.m-line { stroke: #0d0d0d; stroke-width: 1; fill: none; }
.m-frame { fill: none; stroke: #0d0d0d; stroke-width: 1; }
.m-hole { fill: #141414; stroke: #000; }
.m-holeb { fill: #d8d8d8; stroke: #000; stroke-width: .5; }
.cube-top { fill: #f0f0f0; stroke: #888; stroke-dasharray: 4 2; }
.cube-front { fill: #ececec; stroke: #888; stroke-dasharray: 4 2; }
.cube-inner { fill: #e6e6e6; }
.cube-shadow { fill: #000; opacity: .1; }
.cube-z { stroke: #5a5af0; stroke-width: 1.500; }
.cube-x { stroke: #ee6a6a; stroke-width: 1.500; }
.cube-t { font: bold 10px "Open Sans", sans-serif; fill: #a8a8a8; text-anchor: middle; letter-spacing: .6px; }
.cube-lz { font: 13px Roboto, sans-serif; fill: #7d7df5; text-anchor: middle; }
.cube-lx { font: 13px Roboto, sans-serif; fill: #f7a0a0; text-anchor: middle; }

/* browser */
.browser { position: absolute; left: 0; top: 6px; width: 320px; z-index: 1; }
.panel-head, .comments { height: 24px; margin-left: 4px; width: 308px; background: #f0f0f0; border: 1px solid #bdbdbd; display: flex; align-items: center; padding-left: 4px; padding-right: 12px; font-size: 10.6px; color: #555; }
.panel-head .rew { width: 10px; height: 8px; margin-right: 10px; }
.pm { width: 10px; height: 10px; margin-left: auto; }
.tree { margin-top: 3px; font: 10.6px "Liberation Sans", sans-serif; color: #444; }
.row { height: 24px; display: flex; align-items: center; }
.l0 { padding-left: 20px; position: relative; }
.l1 { padding-left: 38px; }
.l2 { padding-left: 76px; }
.tw { width: 12px; height: 12px; margin-right: 8px; }
.tw-c { width: 10px; height: 12px; margin-left: 2px; margin-right: 8px; }
.item { height: 20px; display: flex; align-items: center; padding: 0 10px 0 3px; background: #f0f0f0; }
.t { white-space: nowrap; }
.ic-eye { width: 16px; height: 12px; }
.ic-folder { width: 16px; height: 14px; }
.ic-folder.gap { margin-left: 9px; margin-right: 14px; }
.ic-body { width: 16px; height: 16px; margin-left: 9px; margin-right: 14px; }
.ic-gear { width: 14px; height: 14px; margin-left: 1px; margin-right: 11px; }
.pad-view .ic-folder { margin-right: 14px; }
.root { padding-right: 0; }
.root-name { margin-left: 6px; width: 114px; height: 20px; background: #8f8f8f; display: flex; align-items: center; padding-left: 3px; color: #fff; }
.root-name b { font-size: 11px; margin-left: 14px; white-space: nowrap; }
.ic-root { width: 16px; height: 16px; }
.badge { width: 15px; height: 15px; margin-left: 3px; }
.badge-t { font: bold 9px "Liberation Sans", sans-serif; fill: #fff; }
.radio { width: 13px; height: 13px; margin-left: 11px; }
.l0::after { content: ""; position: absolute; left: 197px; top: 2px; width: 32px; height: 20px; background: #f0f0f0; z-index: -1; }

/* comments, navbar */
.comments { position: absolute; left: 0; bottom: 4px; height: 25px; padding-left: 25px; }
.navbar { position: absolute; left: 842px; bottom: 6px; width: 237px; height: 24px; background: #f0f0f0; display: flex; align-items: center; padding-left: 3px; }
.nv { flex: none; }
.w18 { width: 18px; height: 18px; }
.w17 { width: 17px; height: 17px; }
.w16 { width: 16px; height: 16px; }
.w15 { width: 15px; height: 13px; }
.nc4 { margin-left: 4px; } .nc2 { margin-left: 2px; } .nc3 { margin-left: 3px; }
.ml { margin-left: 5px; } .ml2 { margin-left: 9px; } .ml3 { margin-left: 10px; } .ml4 { margin-left: 9px; }
.ml5 { margin-left: 5px; } .ml6 { margin-left: 6px; }
.chat { position: absolute; right: 12px; bottom: 8px; width: 16px; height: 16px; }

/* timeline */
.timeline { height: 46px; flex: none; background: #f0f0f0; border-top: 1px solid #dcdcdc; display: flex; align-items: flex-start; position: relative; }
.transport { display: flex; align-items: center; height: 12px; margin: 18px 0 0 11px; gap: 13px; }
.tr { width: 12px; height: 12px; }
.track { margin: 14px 0 0 18.500px; width: 264px; position: relative; }
.steps { display: flex; }
.st { width: 16px; height: 17px; margin: 0 4px; }
.bracket { width: 264px; height: 7px; margin-top: 2px; }
.marker { position: absolute; left: 258px; top: -5px; width: 12px; height: 32px; }
.gear { width: 14px; height: 14px; margin: 17px 14px 0 auto; }
```
